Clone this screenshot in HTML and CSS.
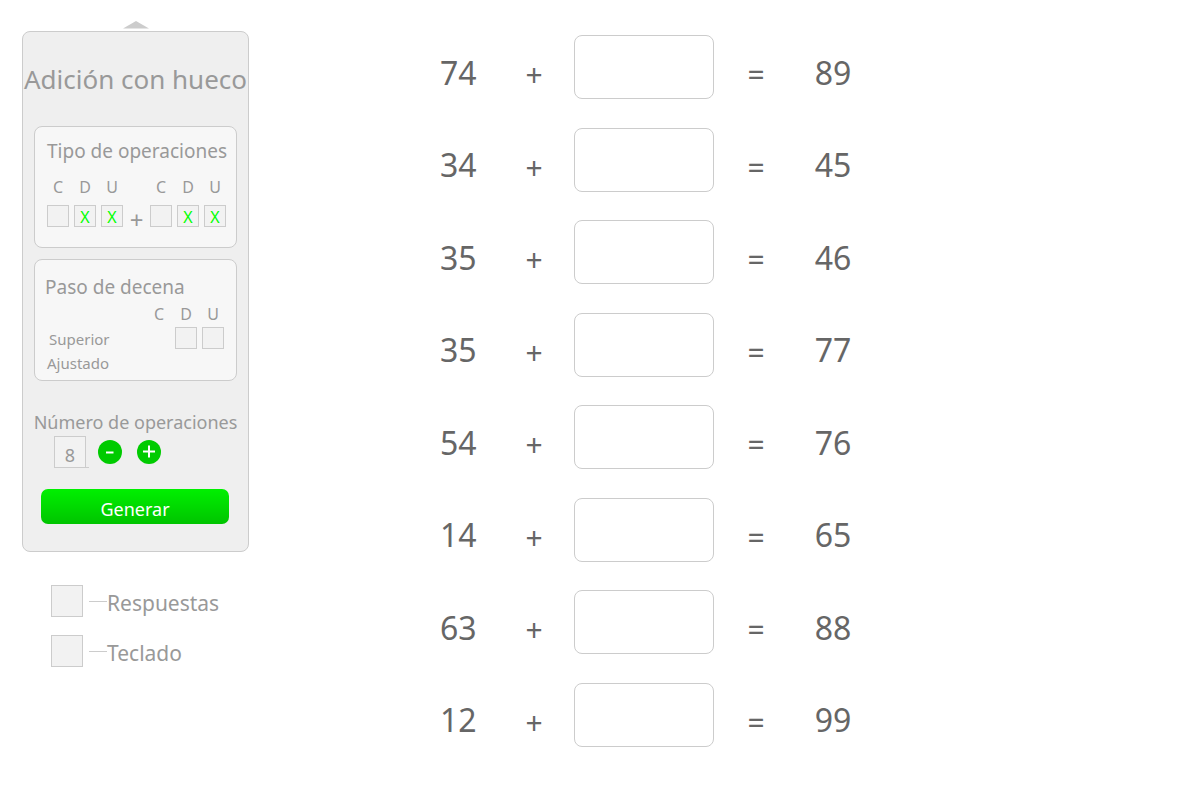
FILE: index.html
```html
<!DOCTYPE html>
<html lang="es">
<head>
<meta charset="utf-8">
<title>Adición con hueco</title>
<link rel="stylesheet" href="styles.css">
</head>
<body>
<div class="page">
  <aside class="sidebar">
    <svg class="collapse" viewBox="0 0 26 8" aria-hidden="true"><path d="M0 7.500 13 0 26 7.500z"/></svg>
    <form class="panel">
      <h1 class="title">Adición con hueco</h1>

      <section class="card">
        <h2 class="heading">Tipo de operaciones</h2>
        <div class="operands">
          <div class="digits">
            <label for="a-c">C</label><label for="a-d">D</label><label for="a-u">U</label>
            <span class="cell"><input class="box" type="checkbox" id="a-c"></span>
            <span class="cell"><input class="box" type="checkbox" id="a-d" checked><span class="mark">X</span></span>
            <span class="cell"><input class="box" type="checkbox" id="a-u" checked><span class="mark">X</span></span>
          </div>
          <span class="plus">+</span>
          <div class="digits">
            <label for="b-c">C</label><label for="b-d">D</label><label for="b-u">U</label>
            <span class="cell"><input class="box" type="checkbox" id="b-c"></span>
            <span class="cell"><input class="box" type="checkbox" id="b-d" checked><span class="mark">X</span></span>
            <span class="cell"><input class="box" type="checkbox" id="b-u" checked><span class="mark">X</span></span>
          </div>
        </div>
      </section>

      <section class="card carry">
        <h2 class="heading">Paso de decena</h2>
        <div class="carry-grid">
          <span></span><span class="col">C</span><label class="col" for="s-d">D</label><label class="col" for="s-u">U</label>
          <span class="upper">Superior</span><span></span>
          <span class="cell"><input class="box" type="checkbox" id="s-d"></span>
          <span class="cell"><input class="box" type="checkbox" id="s-u"></span>
          <span class="adjusted">Ajustado</span>
        </div>
      </section>

      <label class="count-label" for="count">Número de operaciones</label>
      <div class="counter">
        <span class="count-line"><input class="count" id="count" type="text" value="8"></span>
        <button class="round" type="button" aria-label="Menos"><svg viewBox="0 0 24 24"><path d="M8 12.500h7.500"/></svg></button>
        <button class="round" type="button" aria-label="Más"><svg viewBox="0 0 24 24"><path d="M6 11.500h12M12 5.500v12"/></svg></button>
      </div>
      <button class="generate" type="button">Generar</button>
    </form>

    <div class="options">
      <label class="option"><input class="box large" type="checkbox"><span class="dash"></span><span class="option-text">Respuestas</span></label>
      <label class="option"><input class="box large" type="checkbox"><span class="dash"></span><span class="option-text">Teclado</span></label>
    </div>
  </aside>

  <main class="exercises">
    <div class="sum"><span>74</span><span class="sign">+</span><input class="answer" type="text" aria-label="74 más hueco igual a 89"><span class="sign">=</span><span class="result">89</span></div>
    <div class="sum"><span>34</span><span class="sign">+</span><input class="answer" type="text" aria-label="34 más hueco igual a 45"><span class="sign">=</span><span class="result">45</span></div>
    <div class="sum"><span>35</span><span class="sign">+</span><input class="answer" type="text" aria-label="35 más hueco igual a 46"><span class="sign">=</span><span class="result">46</span></div>
    <div class="sum"><span>35</span><span class="sign">+</span><input class="answer" type="text" aria-label="35 más hueco igual a 77"><span class="sign">=</span><span class="result">77</span></div>
    <div class="sum"><span>54</span><span class="sign">+</span><input class="answer" type="text" aria-label="54 más hueco igual a 76"><span class="sign">=</span><span class="result">76</span></div>
    <div class="sum"><span>14</span><span class="sign">+</span><input class="answer" type="text" aria-label="14 más hueco igual a 65"><span class="sign">=</span><span class="result">65</span></div>
    <div class="sum"><span>63</span><span class="sign">+</span><input class="answer" type="text" aria-label="63 más hueco igual a 88"><span class="sign">=</span><span class="result">88</span></div>
    <div class="sum"><span>12</span><span class="sign">+</span><input class="answer" type="text" aria-label="12 más hueco igual a 99"><span class="sign">=</span><span class="result">99</span></div>
  </main>
</div>
</body>
</html>
```
FILE: styles.css
```css
* { box-sizing: border-box; }

body {
  margin: 0;
  background: #fff;
  color: #999;
  font-family: "Noto Sans", "Open Sans", sans-serif;
}

button, input { font: inherit; color: inherit; margin: 0; padding: 0; }
h1, h2 { margin: 0; font-weight: 400; }

.page {
  display: flex;
  gap: 191px;
  min-height: 100vh;
  padding-left: 22px;
}

.sidebar {
  display: flex;
  flex-direction: column;
  width: 227px;
  padding-top: 21px;
}

.collapse {
  width: 26px;
  height: 8px;
  margin: 0 auto 2px;
  fill: #ccc;
}

.panel {
  display: flex;
  flex-direction: column;
  padding: 28px 11px 27px;
  border: 1px solid #ccc;
  border-radius: 8px;
  background: #efefef;
}

.title {
  align-self: center;
  margin-bottom: 28px;
  font-size: 26px;
  line-height: 38px;
  white-space: nowrap;
}

.card {
  height: 122px;
  margin-bottom: 11px;
  padding: 10px 10px 0 12px;
  border: 1px solid #ccc;
  border-radius: 8px;
  background: #f7f7f7;
}

.heading {
  font-size: 19px;
  line-height: 28px;
  white-space: nowrap;
}

.operands {
  display: flex;
  justify-content: space-between;
  align-items: flex-end;
  margin-top: 11px;
}

.digits {
  display: grid;
  grid-template-columns: repeat(3, 22px);
  column-gap: 5px;
  row-gap: 7px;
  font-size: 16px;
  line-height: 22px;
  text-align: center;
}

.plus { font-size: 24px; line-height: 18px; }

.cell { display: grid; }
.cell > * { grid-area: 1 / 1; }

.box {
  appearance: none;
  width: 22px;
  height: 22px;
  border: 1px solid #ccc;
  background: #f2f2f2;
}

.mark {
  color: #0f0;
  font-size: 16px;
  line-height: 24px;
  text-align: center;
  pointer-events: none;
}

.carry { padding-top: 13px; padding-left: 10px; }

.carry-grid {
  display: grid;
  grid-template-columns: 1fr 22px 22px 22px;
  column-gap: 5px;
  padding-right: 2px;
  font-size: 15px;
  line-height: 25px;
}

.col { font-size: 16px; text-align: center; line-height: 26px; }
.upper { padding-left: 4px; line-height: 24px; }
.adjusted { padding-left: 2px; }

.count-label {
  align-self: center;
  margin-top: 16px;
  font-size: 18px;
  line-height: 28px;
  white-space: nowrap;
}

.counter {
  display: flex;
  align-items: center;
  padding-left: 20px;
}

.count-line {
  display: flex;
  width: 35px;
  margin-right: 9px;
  border-bottom: 1px solid #ccc;
}

.count {
  width: 32px;
  height: 31px;
  padding-top: 5px;
  border: 1px solid #ccc;
  border-bottom: 0;
  background: #f2f2f2;
  font-size: 18px;
  text-align: center;
}

.round {
  width: 24px;
  height: 24px;
  margin-right: 15px;
  border: 0;
  border-radius: 50%;
  background: #00cb00;
}

.round svg {
  display: block;
  fill: none;
  stroke: #fff;
  stroke-width: 2;
}

.generate {
  height: 35px;
  margin: 21px 8px 0 7px;
  padding-top: 5px;
  border: 0;
  border-radius: 7px;
  background: linear-gradient(#00f000, #00c400);
  color: #fff;
  font-size: 18px;
}

.options {
  display: grid;
  gap: 18px;
  padding: 33px 0 0 29px;
}

.option {
  display: flex;
  align-items: center;
  height: 32px;
  font-size: 21px;
  line-height: 32px;
}

.option-text { padding-top: 4px; }

.large { width: 32px; height: 32px; }

.dash {
  width: 18px;
  height: 1px;
  margin-left: 6px;
  background: #ccc;
}

.exercises {
  display: flex;
  flex-direction: column;
  justify-content: space-between;
  padding: 35px 0 53px;
  color: #666;
  font-size: 32px;
}

.sum {
  display: grid;
  grid-template-columns: 54px 80px 140px 84px 70px;
  align-items: center;
  height: 64px;
  line-height: 44px;
}

.sum > span { padding-top: 11px; }
.sign, .result { text-align: center; }
.sum > .sign { padding-top: 16px; font-size: 30px; }

.answer {
  width: 100%;
  height: 64px;
  border: 1px solid #ccc;
  border-radius: 8px;
  background: #fff;
  text-align: center;
}
```
